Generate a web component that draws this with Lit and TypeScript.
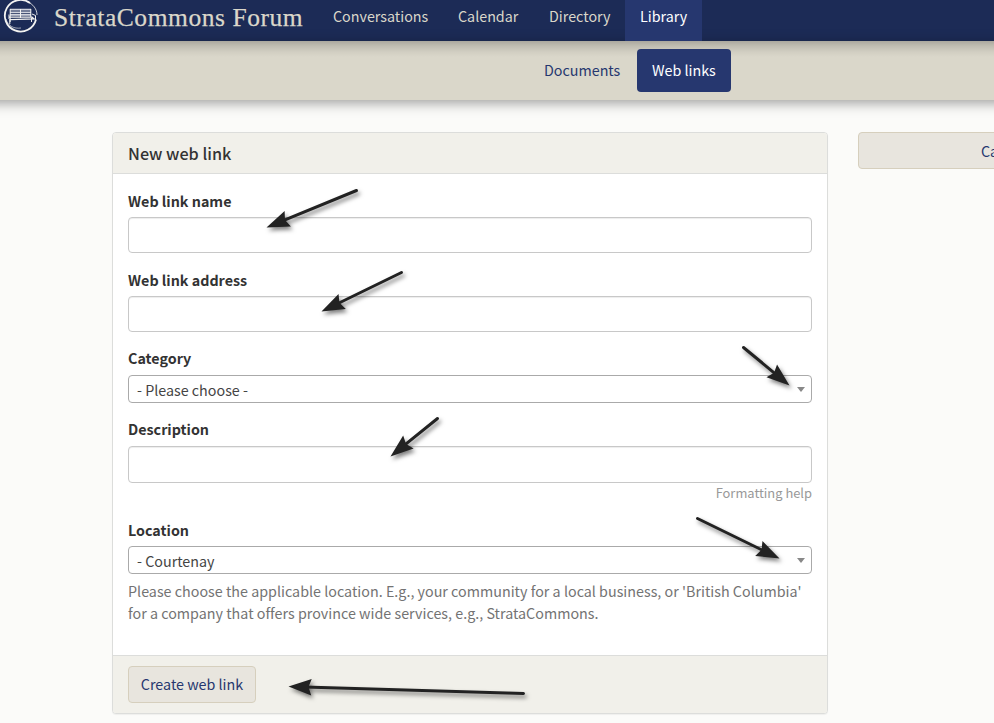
import { LitElement, html, svg, css } from "lit";
import { customElement } from "lit/decorators.js";

interface Arrow { x1: number; y1: number; x2: number; y2: number; }

const ARROWS: Arrow[] = [
  { x1: 356.5, y1: 190.5, x2: 266.5, y2: 227.5 },
  { x1: 401.5, y1: 272.5, x2: 321.5, y2: 311.5 },
  { x1: 743.5, y1: 347.5, x2: 789.5, y2: 385.5 },
  { x1: 437.5, y1: 418.5, x2: 390.5, y2: 456.5 },
  { x1: 697.5, y1: 518.5, x2: 779.5, y2: 558.5 },
  { x1: 523.5, y1: 693.5, x2: 288.5, y2: 686.5 },
];

@customElement("app-root")
export class AppRoot extends LitElement {
  static styles = css`
    :host {
      display: block;
      position: relative;
      width: 100%;
      height: 723px;
      overflow: hidden;
      background: #fbfbf9;
      color: #333;
      font: 14.3px/22px "Noto Sans CJK SC", "Noto Sans", sans-serif;
    }
    * { box-sizing: border-box; }
    .top { height: 41px; background: #1c2b56; display: flex; align-items: flex-start; }
    .logo { width: 38px; height: 36px; margin-left: 1px; flex: none; }
    .brand {
      width: 278px; margin-left: 15px; line-height: 35px; white-space: nowrap;
      font-family: "Source Serif Pro", "Liberation Serif", serif; font-size: 25.5px;
      letter-spacing: 0.55px; color: #dad7ca; -webkit-text-stroke: 0.25px #dad7ca;
    }
    .tab { height: 41px; padding: 5px 15px 0; color: #dad7ca; white-space: nowrap; }
    .w1 { width: 125px; margin-left: -14px; }
    .w2 { width: 91px; }
    .w3 { width: 91px; }
    .tab.on { width: 77px; background: #26376f; color: #fff; }
    .sub {
      height: 59px; margin: 0 -30px; display: flex; padding: 8px 0 0 559px;
      background: #dad7ca linear-gradient(rgba(0,0,0,.22), rgba(0,0,0,.12) 5px, rgba(0,0,0,.04) 11px, transparent 16px);
      box-shadow: 0 3px 12px rgba(0,0,0,.38);
    }
    .pill { width: 108px; height: 43px; padding: 10px 15px; white-space: nowrap; color: #26376f; }
    .pill.on { width: 94px; color: #fff; background: #26376f; border-radius: 4px; }
    .cols { display: flex; gap: 30px; padding: 32px 0 0 112px; }
    .card {
      flex: none; width: 716px; height: 582px; background: #fff; border: 1px solid #dcdddb;
      border-radius: 4px; overflow: hidden; display: flex; flex-direction: column;
      box-shadow: 0 1px 1px rgba(0,0,0,.05);
    }
    .title {
      height: 41px; flex: none; background: #f1f0ea; border-bottom: 1px solid #dcdddb;
      padding: 9px 15px; font-size: 16.2px; font-weight: 500;
    }
    .body { flex: 1; padding: 16px 15px 0; }
    .label { display: block; height: 22px; font-weight: 700; margin-bottom: 5px; }
    .label.tight { line-height: 20px; }
    .input {
      height: 36px; border: 1px solid #c8c8c8; border-radius: 4px; background: #fff;
      box-shadow: inset 0 1px 1px rgba(0,0,0,.075); margin-bottom: 16px;
    }
    .select {
      height: 28px; border: 1px solid #aaa; border-radius: 4px; padding: 3px 6px 0 8px;
      display: flex; justify-content: space-between; color: #444;
    }
    .caret { margin-top: 8px; border: solid transparent; border-width: 5px 4px 0; border-top-color: #888; height: 0; }
    .cat { margin-bottom: 16px; }
    .desc { height: 37px; margin-bottom: 0; }
    .fmt { text-align: right; font-size: 12.9px; line-height: 20px; color: #999; height: 22px; margin-bottom: 14px; }
    .help { margin: 6px 0 0; color: #737373; white-space: nowrap; letter-spacing: 0.01px; }
    .foot { height: 58px; flex: none; border-top: 1px solid #dcdddb; background: #f1f0ea; padding: 10px 15px; }
    .btn {
      display: block; font: inherit; height: 37px; width: 128px; padding: 0 0 2px; color: #26376f;
      background: #e8e5de; border: 1px solid #d6cfbd; border-radius: 4px; white-space: nowrap; text-align: center;
    }
    .side { flex: none; width: 330px; padding: 0 0 0 122px; text-align: left; }
    .marks { position: absolute; left: 0; top: 0; pointer-events: none; filter: drop-shadow(2px 3px 2px rgba(0,0,0,.5)); }
  `;

  private arrow(a: Arrow) {
    const len = Math.hypot(a.x2 - a.x1, a.y2 - a.y1);
    const ang = (Math.atan2(a.y2 - a.y1, a.x2 - a.x1) * 180) / Math.PI;
    return svg`<g transform="translate(${a.x2} ${a.y2}) rotate(${ang})">
      <path d="M${-len} 0H-16" stroke="#222" stroke-width="3" stroke-linecap="round"/>
      <path d="M0 0L-23-8.3L-20 0L-23 8.3Z" fill="#222"/>
    </g>`;
  }

  render() {
    return html`
      <header class="top">
        <svg class="logo" viewBox="0 0 38 36" fill="none" stroke="#f3f3f1">
          <path d="M29 3A15.8 15.8 0 1 0 35 19.5" stroke-width="1.8"/>
          <path d="M26 1.5C32 4 36 9 36 15" stroke-width=".8"/>
          <path d="M5 19C7 26 13 29 20 28" stroke-width=".6"/>
          <path d="M9 9.7H30M9 12.3H30M9 14.8H30" stroke-width="1.8" stroke="#d0d3dc"/>
          <path d="M9.2 9V22M19.5 9V18M29.8 9V17" stroke-width="1"/>
          <path d="M8 17.2H31L33 19L9 19.6" stroke-width="1.3"/>
          <path d="M8 14.5V19M8.8 19V24M31 14L34.5 15.5V21M30.5 18V22" stroke-width="1"/>
        </svg>
        <div class="brand">StrataCommons Forum</div>
        <nav class="tab w1">Conversations</nav>
        <nav class="tab w2">Calendar</nav>
        <nav class="tab w3">Directory</nav>
        <nav class="tab on">Library</nav>
      </header>
      <nav class="sub"><span class="pill">Documents</span><span class="pill on">Web links</span></nav>
      <main class="cols">
        <section class="card">
          <div class="title">New web link</div>
          <div class="body">
            <label class="label">Web link name</label><div class="input"></div>
            <label class="label">Web link address</label><div class="input"></div>
            <label class="label tight">Category</label>
            <div class="select cat"><span>- Please choose -</span><i class="caret"></i></div>
            <label class="label tight">Description</label><div class="input desc"></div>
            <div class="fmt">Formatting help</div>
            <label class="label">Location</label>
            <div class="select"><span>- Courtenay</span><i class="caret"></i></div>
            <p class="help">Please choose the applicable location. E.g., your community for a local business, or 'British Columbia'<br>for a company that offers province wide services, e.g., StrataCommons.</p>
          </div>
          <div class="foot"><button class="btn">Create web link</button></div>
        </section>
        <button class="btn side">Cancel</button>
      </main>
      <svg class="marks" width="994" height="723">${ARROWS.map((a) => this.arrow(a))}</svg>
    `;
  }
}
